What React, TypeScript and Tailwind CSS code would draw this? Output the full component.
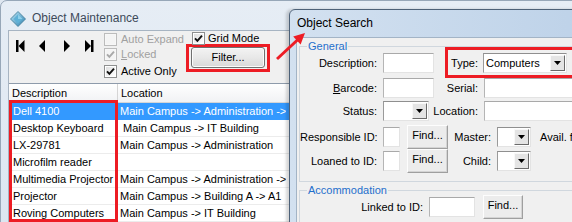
import React from "react";

const rows: [string, string][] = [
  ["Dell 4100", "Main Campus -> Administration -> A"],
  ["Desktop Keyboard", " Main Campus -> IT Building"],
  ["LX-29781", "Main Campus -> Administration"],
  ["Microfilm reader", ""],
  ["Multimedia Projector", "Main Campus -> Administration -> A"],
  ["Projector", "Main Campus -> Building A -> A1"],
  ["Roving Computers", "Main Campus -> IT Building"],
];

function CheckBox({ checked = false, disabled = false }: { checked?: boolean; disabled?: boolean }) {
  return (
    <span
      className={`relative flex h-[13px] w-[13px] shrink-0 items-center justify-center border ${
        disabled ? "border-[#bcbcbc] bg-[#f7f7f7]" : "border-[#8e8f8f] bg-white"
      }`}
    >
      <span
        className={`absolute inset-[1px] ${
          disabled ? "bg-[#f4f4f4]" : "bg-gradient-to-br from-[#dedede] to-[#ffffff]"
        }`}
      />
      {checked && (
        <svg width="11" height="11" viewBox="0 0 11 11" className="relative">
          <path
            d="M2 5.3 L4.4 7.9 L9 2.6"
            fill="none"
            stroke={disabled ? "#a8a8a8" : "#111"}
            strokeWidth="1.9"
          />
        </svg>
      )}
    </span>
  );
}

function TextBox({ className }: { className: string }) {
  return (
    <div
      className={`h-[20px] shrink-0 border border-t-[#a9a9a9] border-l-[#b5b5b5] border-r-[#e3e3e3] border-b-[#e3e3e3] bg-white ${className}`}
    />
  );
}

function Combo({ className, value = "" }: { className: string; value?: string }) {
  return (
    <div
      className={`flex h-[20px] shrink-0 border border-t-[#8f8f8f] border-l-[#9a9a9a] border-r-[#e3e3e3] border-b-[#e3e3e3] bg-white ${className}`}
    >
      <div className="flex flex-1 items-center overflow-hidden whitespace-nowrap pl-[2px]">{value}</div>
      <div className="m-[1px] flex w-[15px] items-center justify-center border border-t-[#f8f8f8] border-l-[#f8f8f8] border-r-[#6a6a6a] border-b-[#6a6a6a] bg-[#e4e4e4]">
        <svg width="7" height="4" viewBox="0 0 7 4">
          <polygon points="0,0 7,0 3.5,4" fill="#000" />
        </svg>
      </div>
    </div>
  );
}

function FindButton({ className }: { className: string }) {
  return (
    <div
      className={`flex h-[24px] shrink-0 justify-center border border-t-[#fdfdfd] border-l-[#fdfdfd] border-r-[#9f9f9f] border-b-[#9f9f9f] bg-[#ececec] pt-[3px] shadow-[inset_-1px_-1px_0_#d4d4d4] ${className}`}
    >
      Find...
    </div>
  );
}

function Label({ className, children }: { className: string; children: React.ReactNode }) {
  return <div className={`shrink-0 whitespace-nowrap text-right ${className}`}>{children}</div>;
}

function NavFirst() {
  return (
    <svg width="9" height="12" viewBox="0 0 9 12">
      <rect x="0" y="0" width="2.5" height="12" fill="#000" />
      <polygon points="2.5,6 8.5,0 8.5,12" fill="#000" />
    </svg>
  );
}
function NavPrev() {
  return (
    <svg width="6" height="12" viewBox="0 0 6 12">
      <polygon points="0,6 6,0 6,12" fill="#000" />
    </svg>
  );
}
function NavNext() {
  return (
    <svg width="6" height="12" viewBox="0 0 6 12">
      <polygon points="0,0 6,6 0,12" fill="#000" />
    </svg>
  );
}
function NavLast() {
  return (
    <svg width="9" height="12" viewBox="0 0 9 12">
      <polygon points="0,0 6,6 0,12" fill="#000" />
      <rect x="6" y="0" width="2.5" height="12" fill="#000" />
    </svg>
  );
}

function AppIcon() {
  return (
    <svg width="16" height="16" viewBox="0 0 16 16">
      <defs>
        <linearGradient id="dg" x1="0" y1="0" x2="1" y2="1">
          <stop offset="0" stopColor="#bfe6f5" />
          <stop offset="1" stopColor="#2a7fb0" />
        </linearGradient>
      </defs>
      <polygon points="8,0.5 15.5,8 8,15.5 0.5,8" fill="url(#dg)" stroke="#3a7896" strokeWidth="0.8" />
      <polygon points="8,3.5 12.5,8 8,12.5 3.5,8" fill="#5fb1d6" />
      <polygon points="8,3.5 12.5,8 8,8" fill="#8fd0ea" />
    </svg>
  );
}

function BackgroundWindow() {
  return (
    <div className="absolute left-0 top-0 flex h-[260px] w-[620px] flex-col rounded-t-[7px] border border-[#97a7b8] bg-gradient-to-b from-[#e6edf5] to-[#dbe5f0]">
      <div className="flex h-[29px] shrink-0 items-center gap-[6px] pl-[9px] pt-[6px]">
        <AppIcon />
        <span className="text-[12px] text-[#3d4a5a]">Object Maintenance</span>
      </div>
      <div className="ml-[7px] flex flex-1 flex-col border border-[#a7b4c2] bg-[#f0f0f0]">
        <div className="flex h-[52px] shrink-0">
          <div className="flex items-start pl-[7px] pt-[9px]">
            <NavFirst />
            <span className="ml-[14px] flex">
              <NavPrev />
            </span>
            <span className="ml-[19px] flex">
              <NavNext />
            </span>
            <span className="ml-[15px] flex">
              <NavLast />
            </span>
          </div>
          <div className="ml-[10px] flex w-[82px] flex-col pt-[2px]">
            <div className="flex h-[13px] items-center gap-[4px] whitespace-nowrap text-[#a0a0a0]">
              <CheckBox disabled />
              <span>Auto Expand</span>
            </div>
            <div className="mt-[2px] flex h-[13px] items-center gap-[4px] whitespace-nowrap text-[#a0a0a0]">
              <CheckBox checked disabled />
              <span>
                <span className="underline">L</span>ocked
              </span>
            </div>
            <div className="mt-[4px] flex h-[13px] items-center gap-[4px] whitespace-nowrap">
              <CheckBox checked />
              <span>Active Only</span>
            </div>
          </div>
          <div className="flex flex-col pt-[1px]">
            <div className="ml-[6px] flex h-[12px] items-center gap-[3px] whitespace-nowrap">
              <CheckBox checked />
              <span>Grid Mode</span>
            </div>
            <div className="flex h-[28px] w-[84px] border-[3px] border-[#ed1c24] px-[2px] pb-[1px]">
              <div className="flex flex-1 items-center justify-center rounded-[3px] border border-[#707070] bg-gradient-to-b from-[#f3f3f3] via-[#e8e8e8] to-[#d8d8d8] shadow-[inset_0_0_0_1px_#fbfbfb]">
                Filter...
              </div>
            </div>
          </div>
        </div>
        <div className="flex flex-1 flex-col border-t border-[#8e9bab] bg-white">
          <div className="flex h-[19px] shrink-0 border-b border-[#d5d5d5] bg-gradient-to-b from-white to-[#f1f2f4]">
            <div className="flex w-[109px] items-center border-r border-[#d5d5d5] pl-[3px]">Description</div>
            <div className="flex items-center pl-[3px]">Location</div>
          </div>
          {rows.map(([d, l], i) => (
            <div
              key={d}
              className={`flex h-[17px] shrink-0 border-b ${
                i === 0 ? "border-[#3399ff] bg-[#3399ff] text-white" : "border-[#ececec]"
              }`}
            >
              <div
                className={`flex w-[109px] items-center overflow-hidden whitespace-nowrap border-r pl-[4px] ${
                  i === 0 ? "border-[#3399ff]" : "border-[#d5d5d5]"
                }`}
              >
                {d}
              </div>
              <div className="flex w-[168px] items-center overflow-hidden whitespace-pre pl-[2px]">{l}</div>
            </div>
          ))}
        </div>
      </div>
    </div>
  );
}

function Dialog() {
  return (
    <div className="absolute left-[289px] top-[9px] flex h-[240px] w-[320px] flex-col rounded-t-[6px] border border-[#4d6178] bg-gradient-to-r from-[#d3e1f0] to-[#bcd1e8] shadow-[-3px_0_3px_rgba(0,0,0,0.16)]">
      <div className="flex h-[27px] shrink-0 items-center pl-[7px] text-[12px] text-black">Object Search</div>
      <div className="ml-[6px] flex flex-1 flex-col border-l border-t border-[#a3b4c6] bg-[#f0f0f0]">
        <fieldset className="ml-[2px] mt-[2px] w-[300px] border border-[#d0d7de] pb-[8px]">
          <legend className="ml-[7px] px-[1px] text-[#1f6fcc]">General</legend>
          <div className="flex h-[20px] items-center">
            <Label className="w-[77px]">Description:</Label>
            <TextBox className="ml-[6px] w-[51px]" />
            <Label className="w-[44px]">Type:</Label>
            <Combo className="ml-[5px] w-[84px]" value="Computers" />
          </div>
          <div className="mt-[5px] flex h-[20px] items-center">
            <Label className="w-[77px]">
              <span className="underline">B</span>arcode:
            </Label>
            <TextBox className="ml-[6px] w-[51px]" />
            <Label className="w-[44px]">Serial:</Label>
            <TextBox className="ml-[6px] flex-1" />
          </div>
          <div className="mt-[3px] flex h-[20px] items-center">
            <Label className="w-[77px]">Status:</Label>
            <Combo className="ml-[6px] w-[46px]" />
            <Label className="w-[49px]">Location:</Label>
            <TextBox className="ml-[6px] flex-1" />
          </div>
          <div className="mt-[4px] flex h-[24px] items-center">
            <Label className="w-[77px]">Responsible ID:</Label>
            <TextBox className="ml-[6px] w-[17px]" />
            <FindButton className="ml-[7px] w-[41px]" />
            <Label className="w-[43px]">Master:</Label>
            <Combo className="ml-[6px] w-[34px]" />
            <div className="ml-[9px] whitespace-nowrap">Avail. f</div>
          </div>
          <div className="flex h-[24px] items-center">
            <Label className="w-[77px]">Loaned to ID:</Label>
            <TextBox className="ml-[6px] w-[17px]" />
            <FindButton className="ml-[7px] w-[41px]" />
            <Label className="w-[43px]">Child:</Label>
            <Combo className="ml-[6px] w-[34px]" />
          </div>
        </fieldset>
        <fieldset className="ml-[2px] mt-[2px] w-[300px] border border-[#d0d7de] pb-[8px]">
          <legend className="ml-[7px] px-[1px] text-[#1f6fcc]">Accommodation</legend>
          <div className="mt-[-2px] flex h-[24px] items-center">
            <Label className="w-[123px]">Linked to ID:</Label>
            <TextBox className="ml-[6px] w-[46px]" />
            <FindButton className="ml-[8px] w-[40px]" />
          </div>
        </fieldset>
      </div>
    </div>
  );
}

export default function App() {
  return (
    <div className="relative h-[222px] w-[572px] overflow-hidden bg-[#dfe7f0] font-['Liberation_Sans',Arial,sans-serif] text-[11px] leading-[13px] text-black">
      <BackgroundWindow />
      <Dialog />
      {/* annotation overlays */}
      <div className="absolute left-[9px] top-[100px] h-[122px] w-[109px] border-[3px] border-[#ed1c24]" />
      <div className="absolute left-[445px] top-[47px] h-[31px] w-[140px] border-[3px] border-[#ed1c24]" />
      <svg className="pointer-events-none absolute left-0 top-0" width="572" height="222" viewBox="0 0 572 222">
        <line x1="277" y1="59" x2="298" y2="39.5" stroke="#ed1c24" strokeWidth="3" />
        <polygon points="305,33 300.6,44.4 293.2,36.6" fill="#ed1c24" />
      </svg>
    </div>
  );
}
